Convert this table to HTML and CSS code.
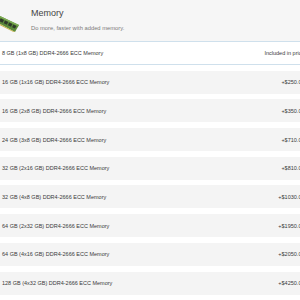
FILE: index.html
```html
<!DOCTYPE html>
<html lang="en">
<head>
<meta charset="utf-8">
<title>Memory</title>
<link rel="stylesheet" href="styles.css">
</head>
<body>
<div class="page">
  <header class="group-head">
    <svg class="thumb" width="21" height="20" viewBox="0 0 21 20" aria-hidden="true">
      <polygon points="0,4 19,13 15,20 0,12" fill="#5c8a3a"/>
      <polygon points="0,4 19,13 18.3,14.3 0,5.6" fill="#7fae55"/>
      <polygon points="1,6.5 4,8 2.5,10.8 0,9.6 0,7.5" fill="#2f3a2a"/>
      <polygon points="5,8.6 8.2,10.1 6.8,12.8 3.7,11.3" fill="#2f3a2a"/>
      <polygon points="9.2,10.6 12.4,12.1 11,14.8 7.9,13.3" fill="#2f3a2a"/>
      <polygon points="13.4,12.6 16.4,14 15,16.6 12.1,15.3" fill="#2f3a2a"/>
      <polygon points="0,12 15,20 13.5,20 0,13.3" fill="#c9b44a"/>
    </svg>
    <div class="head-text">
      <h2 class="title">Memory</h2>
      <p class="subtitle">Do more, faster with added memory.</p>
    </div>
  </header>
  <ul class="options">
    <li class="opt selected"><span class="name">8 GB (1x8 GB) DDR4-2666 ECC Memory</span><span class="price">Included in price</span></li>
    <li class="opt"><span class="name">16 GB (1x16 GB) DDR4-2666 ECC Memory</span><span class="price">+$250.00</span></li>
    <li class="opt"><span class="name">16 GB (2x8 GB) DDR4-2666 ECC Memory</span><span class="price">+$350.00</span></li>
    <li class="opt"><span class="name">24 GB (3x8 GB) DDR4-2666 ECC Memory</span><span class="price">+$710.00</span></li>
    <li class="opt"><span class="name">32 GB (2x16 GB) DDR4-2666 ECC Memory</span><span class="price">+$810.00</span></li>
    <li class="opt"><span class="name">32 GB (4x8 GB) DDR4-2666 ECC Memory</span><span class="price">+$1030.00</span></li>
    <li class="opt"><span class="name">64 GB (2x32 GB) DDR4-2666 ECC Memory</span><span class="price">+$1950.00</span></li>
    <li class="opt"><span class="name">64 GB (4x16 GB) DDR4-2666 ECC Memory</span><span class="price">+$2050.00</span></li>
    <li class="opt"><span class="name">128 GB (4x32 GB) DDR4-2666 ECC Memory</span><span class="price">+$4250.00</span></li>
  </ul>
</div>
</body>
</html>
```

FILE: styles.css
```css
html, body {
  margin: 0;
  padding: 0;
  overflow: hidden;
  background: #ffffff;
}
body {
  width: 300px;
  height: 300px;
  font-family: "Liberation Sans", Arial, sans-serif;
  color: #333333;
}
.page {
  width: 308px;
}
.group-head {
  display: flex;
  align-items: flex-start;
  height: 41px;
  background: #f6f6f6;
  box-sizing: border-box;
}
.thumb {
  flex: none;
  margin-top: 12px;
  width: 21px;
  height: 20px;
}
.head-text {
  margin-left: 10px;
  padding-top: 8px;
}
.title {
  margin: 0;
  font-size: 9px;
  line-height: 11px;
  font-weight: normal;
  color: #444444;
}
.subtitle {
  margin: 5px 0 0;
  font-size: 5.8px;
  line-height: 8px;
  color: #7a7a7a;
}
.options {
  list-style: none;
  margin: 0;
  padding: 0;
  display: flex;
  flex-direction: column;
  gap: 5.7px;
}
.opt {
  display: flex;
  justify-content: space-between;
  align-items: center;
  height: 23px;
  padding: 0 3.5px 0 2px;
  background: #f4f4f4;
  font-size: 5.5px;
  color: #3a3a3a;
  white-space: nowrap;
}
.opt.selected {
  height: 24px;
  box-sizing: border-box;
  background: #ffffff;
  border-top: 1px solid #cfe0ec;
  border-bottom: 1px solid #cfe0ec;
}
```
